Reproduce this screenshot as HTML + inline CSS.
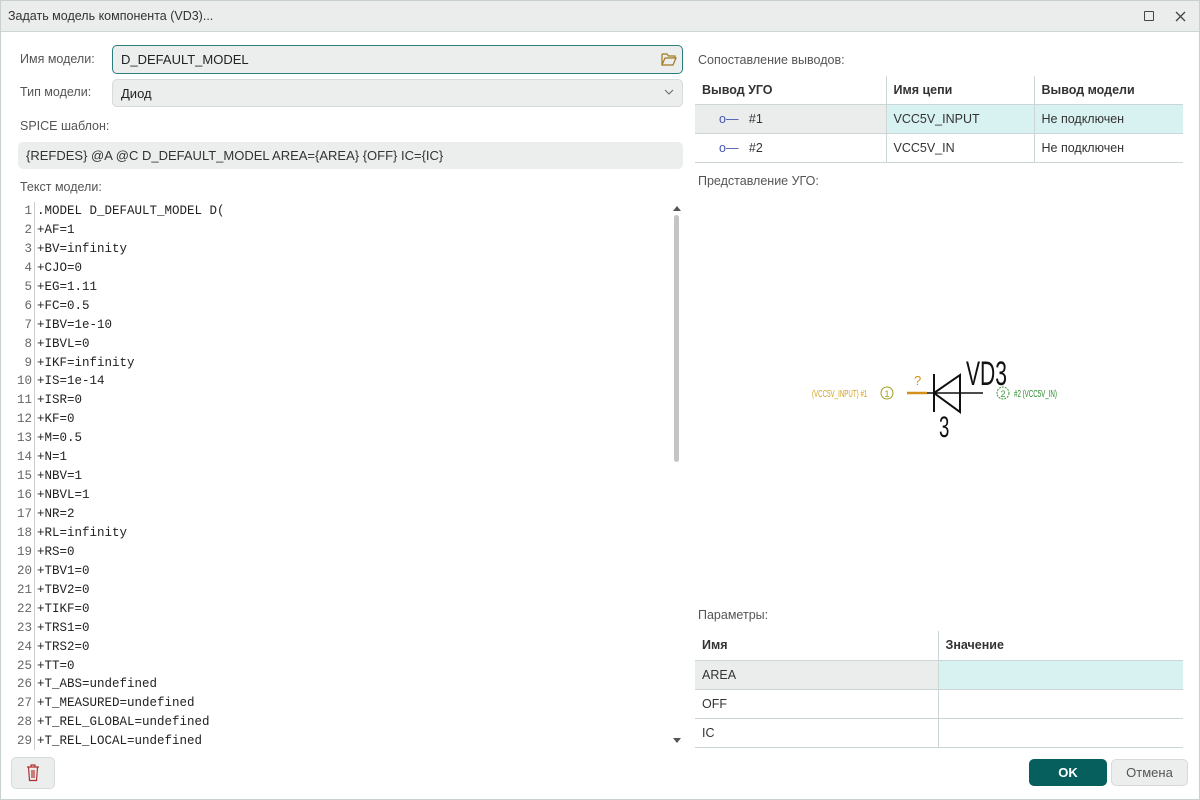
<!DOCTYPE html>
<html><head><meta charset="utf-8"><style>
*{box-sizing:border-box;margin:0;padding:0}
body{width:1200px;height:800px;overflow:hidden;background:#fff;font-family:"Liberation Sans",sans-serif;font-size:13px;color:#333;position:relative}
.a{position:absolute}
.lbl{color:#555;font-size:12.5px}
.box{background:#eceeed;border:1px solid #d6dada;border-radius:5px;padding-left:8px;display:flex;align-items:center}
table{border-collapse:collapse;position:absolute;font-size:12.5px}
td{border-bottom:1px solid #cdd6d6;padding-left:7px}
td+td{border-left:1px solid #cdd6d6}
th{font-weight:bold;text-align:left;padding-left:7px;border-bottom:1px solid #cdd6d6;color:#333}
th+th{border-left:1px solid #cdd6d6}
.code{font-family:"Liberation Mono",monospace;font-size:12.5px;line-height:18.93px;color:#222}
</style></head><body>
<div class="a" style="left:0;top:0;width:1200px;height:800px;border:1px solid #c8d0d0;z-index:5;pointer-events:none"></div>
<div class="a" style="left:0;top:0;width:1200px;height:32px;background:#ebeded;border-bottom:1px solid #cdd6d6"></div>
<div class="a" style="left:8px;top:9px;font-size:12.5px;color:#333">Задать модель компонента (VD3)...</div>
<div class="a" style="left:1144px;top:11px;width:10px;height:10px;border:1.5px solid #444;border-radius:1px"></div>
<svg class="a" style="left:1175px;top:11px" width="11" height="11"><path d="M1 1L10 10M10 1L1 10" stroke="#444" stroke-width="1.3"/></svg>

<div class="a lbl" style="left:20px;top:52px">Имя модели:</div>
<div class="a box" style="left:112px;top:45px;width:571px;height:29px;border:1.5px solid #2a7f7c;color:#222">D_DEFAULT_MODEL</div>
<svg class="a" style="left:661px;top:52px" width="16" height="14"><path d="M1 2h5l1.5 2H14v2M1 2v11h11l3-7H4L1 13" fill="none" stroke="#a0781e" stroke-width="1.2"/></svg>
<div class="a lbl" style="left:20px;top:85px">Тип модели:</div>
<div class="a box" style="left:112px;top:79px;width:571px;height:28px;color:#222">Диод</div>
<svg class="a" style="left:664px;top:89px" width="10" height="7"><path d="M1 1l4 4 4-4" fill="none" stroke="#666" stroke-width="1"/></svg>
<div class="a lbl" style="left:20px;top:119px">SPICE шаблон:</div>
<div class="a box" style="left:18px;top:142px;width:665px;height:27px;border:none;color:#333">{REFDES} @A @C D_DEFAULT_MODEL AREA={AREA} {OFF} IC={IC}</div>
<div class="a lbl" style="left:20px;top:180px">Текст модели:</div>
<div class="a" style="left:34px;top:202px;width:1px;height:548px;background:#ccc"></div>
<div class="a code" style="left:8px;top:202px;width:24px;text-align:right;color:#666">1<br>2<br>3<br>4<br>5<br>6<br>7<br>8<br>9<br>10<br>11<br>12<br>13<br>14<br>15<br>16<br>17<br>18<br>19<br>20<br>21<br>22<br>23<br>24<br>25<br>26<br>27<br>28<br>29</div>
<div class="a code" style="left:37px;top:202px;height:548px;overflow:hidden">.MODEL D_DEFAULT_MODEL D(<br>+AF=1<br>+BV=infinity<br>+CJO=0<br>+EG=1.11<br>+FC=0.5<br>+IBV=1e-10<br>+IBVL=0<br>+IKF=infinity<br>+IS=1e-14<br>+ISR=0<br>+KF=0<br>+M=0.5<br>+N=1<br>+NBV=1<br>+NBVL=1<br>+NR=2<br>+RL=infinity<br>+RS=0<br>+TBV1=0<br>+TBV2=0<br>+TIKF=0<br>+TRS1=0<br>+TRS2=0<br>+TT=0<br>+T_ABS=undefined<br>+T_MEASURED=undefined<br>+T_REL_GLOBAL=undefined<br>+T_REL_LOCAL=undefined</div>
<svg class="a" style="left:673px;top:206px" width="8" height="6"><path d="M0 5L4 0 8 5z" fill="#555"/></svg>
<div class="a" style="left:674px;top:215px;width:5px;height:247px;background:#c4c4c4;border-radius:3px"></div>
<svg class="a" style="left:673px;top:738px" width="8" height="6"><path d="M0 0L4 5 8 0z" fill="#555"/></svg>
<div class="a" style="left:11px;top:757px;width:44px;height:32px;background:#eceeed;border:1px solid #d6dada;border-radius:5px"></div>
<svg class="a" style="left:26px;top:764px" width="14" height="18"><path d="M1 3h12M5 3V1h4v2M2.5 3.5l1 13h7l1-13M6 6v8M8 6v8" fill="none" stroke="#b03030" stroke-width="1.2"/></svg>

<div class="a lbl" style="left:698px;top:53px">Сопоставление выводов:</div>
<table style="left:695px;top:76px;width:488px">
<tr style="height:28px"><th style="width:191px">Вывод УГО</th><th style="width:148px">Имя цепи</th><th>Вывод модели</th></tr>
<tr style="height:29px"><td style="background:#ebeded;padding-left:24px"><span style="color:#4455aa">o—</span>&nbsp;&nbsp;&nbsp;#1</td><td style="background:#d8f1f1">VCC5V_INPUT</td><td style="background:#d8f1f1">Не подключен</td></tr>
<tr style="height:29px"><td style="padding-left:24px"><span style="color:#4455aa">o—</span>&nbsp;&nbsp;&nbsp;#2</td><td>VCC5V_IN</td><td>Не подключен</td></tr>
</table>
<div class="a lbl" style="left:698px;top:174px">Представление УГО:</div>
<svg class="a" style="left:800px;top:340px" width="280" height="110">
<text transform="translate(12,57) scale(0.62,1)" font-size="10" fill="#d4a020">(VCC5V_INPUT) #1</text>
<circle cx="87" cy="53" r="6" fill="none" stroke="#a0a020"/><text x="84.5" y="57" font-size="9" fill="#a0a020">1</text>
<line x1="107" y1="53" x2="127" y2="53" stroke="#d4901a" stroke-width="2.5"/>
<text x="114" y="45" font-size="13" fill="#d4901a">?</text>
<line x1="127" y1="53" x2="183" y2="53" stroke="#111" stroke-width="1.5"/>
<line x1="134" y1="34" x2="134" y2="72" stroke="#111" stroke-width="2"/>
<path d="M134 53L160 35V72Z" fill="none" stroke="#111" stroke-width="2"/>
<text transform="translate(166,45) scale(0.62,1)" font-size="34" fill="#111">VD3</text>
<text transform="translate(139,97) scale(0.62,1)" font-size="30" fill="#111">3</text>
<circle cx="203" cy="53" r="6" fill="none" stroke="#3a9a3a" stroke-dasharray="2 1"/><text x="200.5" y="57" font-size="9" fill="#3a9a3a">2</text>
<text transform="translate(214,57) scale(0.62,1)" font-size="10" fill="#2a8a2a">#2 (VCC5V_IN)</text>
</svg>

<div class="a lbl" style="left:698px;top:608px">Параметры:</div>
<table style="left:695px;top:631px;width:488px">
<tr style="height:29px"><th style="width:243px">Имя</th><th>Значение</th></tr>
<tr style="height:29px"><td style="background:#ebeded">AREA</td><td style="background:#d8f1f1"></td></tr>
<tr style="height:29px"><td>OFF</td><td></td></tr>
<tr style="height:29px"><td>IC</td><td></td></tr>
</table>
<div class="a" style="left:1029px;top:759px;width:78px;height:27px;background:#065f5c;border-radius:5px;color:#fff;font-weight:bold;display:flex;align-items:center;justify-content:center">OK</div>
<div class="a" style="left:1111px;top:759px;width:77px;height:27px;background:#eceeed;border:1px solid #d6dada;border-radius:5px;color:#555;display:flex;align-items:center;justify-content:center">Отмена</div>
</body></html>
